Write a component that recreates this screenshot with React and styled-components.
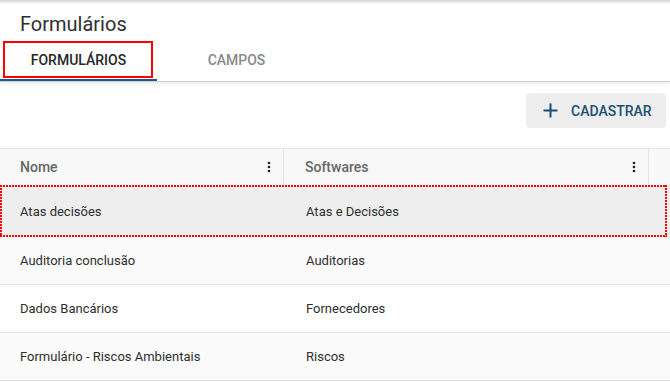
import React from "react";
import styled, { createGlobalStyle } from "styled-components";

const GlobalStyle = createGlobalStyle`
  html, body { margin: 0; padding: 0; background: #ffffff; }
  body { font-family: Roboto, "Noto Sans", Arial, sans-serif; -webkit-font-smoothing: antialiased; }
  * { box-sizing: border-box; }
`;

const Page = styled.div`
  width: 670px;
  height: 382px;
  overflow: hidden;
  background: #fff;
`;

const Header = styled.header`
  background: #fff;
  box-shadow: inset 0 4px 3px -2px rgba(0, 0, 0, 0.18), 0 2px 4px rgba(0, 0, 0, 0.08);
  border-bottom: 1px solid #cfcfcf;
  position: relative;
`;

const Title = styled.h1`
  margin: 0;
  padding: 12px 20px 0;
  font-size: 20px;
  line-height: 24px;
  font-weight: 400;
  color: #2f2f2f;
`;

const TabBar = styled.nav`
  display: flex;
  margin-top: 2px;
`;

const Tab = styled.div`
  position: relative;
  width: ${(p) => (p.$first ? "157px" : "159px")};
  height: 43px;
  display: flex;
  align-items: center;
  justify-content: center;
  font-size: 14px;
  font-weight: 500;
  color: ${(p) => (p.$active ? "#262626" : "#8a8a8a")};
  border-bottom: 2px solid ${(p) => (p.$active ? "#1f5a86" : "transparent")};
  padding-top: 2px;
`;

const Highlight = styled.span`
  position: absolute;
  top: 3px;
  left: 3px;
  right: 4px;
  bottom: 1px;
  border: 2px solid #ff0000;
  pointer-events: none;
`;

const Toolbar = styled.div`
  display: flex;
  justify-content: flex-end;
  padding: 11px 4px 0 0;
`;

const AddButton = styled.button`
  display: flex;
  align-items: center;
  gap: 13px;
  width: 140px;
  height: 35px;
  padding: 0 0 0 17px;
  border: none;
  border-radius: 4px;
  background: #eeeeee;
  color: #1d4f74;
  font-family: inherit;
  font-size: 14px;
  font-weight: 500;
  cursor: pointer;
`;

const Table = styled.div`
  margin-top: 20px;
  border-top: 1px solid #e4e4e4;
`;

const HeadRow = styled.div`
  display: grid;
  grid-template-columns: 284px 365px 1fr;
  height: 36px;
  background: #f8f8f8;
`;

const HeadCell = styled.div`
  display: flex;
  align-items: center;
  justify-content: space-between;
  padding: 0 12px 0 ${(p) => p.$pad || 20}px;
  border-right: ${(p) => (p.$last ? "none" : "1px solid #e2e2e2")};
  font-size: 14px;
  font-weight: 500;
  color: #666666;
`;

const Row = styled.div`
  position: relative;
  display: grid;
  grid-template-columns: 284px 1fr;
  height: ${(p) => p.$h || 48}px;
  background: ${(p) => p.$bg};
  border-bottom: ${(p) => (p.$selected ? "none" : "1px solid #e2e2e2")};
  font-size: 13px;
  color: #2e2e2e;
`;

const Cell = styled.div`
  display: flex;
  align-items: center;
  padding-left: ${(p) => p.$pad || 20}px;
`;

const Focus = styled.span`
  position: absolute;
  top: 0;
  left: 0;
  right: 3px;
  bottom: 0;
  pointer-events: none;
  background:
    linear-gradient(to right, #ff0000 2px, transparent 2px) top left / 3px 2px repeat-x,
    linear-gradient(to right, #ff0000 2px, transparent 2px) bottom left / 3px 2px repeat-x,
    linear-gradient(to bottom, #ff0000 2px, transparent 2px) top left / 2px 3px repeat-y,
    linear-gradient(to bottom, #ff0000 2px, transparent 2px) top right / 2px 3px repeat-y;
`;

const Kebab = () => (
  <svg width="4" height="12" viewBox="0 0 4 12" aria-hidden="true">
    <circle cx="2" cy="2" r="1.35" fill="#222" />
    <circle cx="2" cy="6" r="1.35" fill="#222" />
    <circle cx="2" cy="10" r="1.35" fill="#222" />
  </svg>
);

const Plus = () => (
  <svg width="15" height="15" viewBox="0 0 15 15" aria-hidden="true">
    <path d="M7.5 0.5v14M0.5 7.5h14" stroke="#1d4f74" strokeWidth="2" fill="none" />
  </svg>
);

const rows = [
  { nome: "Atas decisões", soft: "Atas e Decisões", bg: "#eeeeee", selected: true, h: 52 },
  { nome: "Auditoria conclusão", soft: "Auditorias", bg: "#fafafa" },
  { nome: "Dados Bancários", soft: "Fornecedores", bg: "#ffffff" },
  { nome: "Formulário - Riscos Ambientais", soft: "Riscos", bg: "#fafafa" },
];

export default function App() {
  return (
    <Page>
      <GlobalStyle />
      <Header>
        <Title>Formulários</Title>
        <TabBar>
          <Tab $active $first>
            FORMULÁRIOS
            <Highlight />
          </Tab>
          <Tab>CAMPOS</Tab>
        </TabBar>
      </Header>
      <Toolbar>
        <AddButton>
          <Plus />
          CADASTRAR
        </AddButton>
      </Toolbar>
      <Table>
        <HeadRow>
          <HeadCell>
            Nome
            <Kebab />
          </HeadCell>
          <HeadCell $pad={21}>
            Softwares
            <Kebab />
          </HeadCell>
          <HeadCell $last />
        </HeadRow>
        {rows.map((r) => (
          <Row key={r.nome} $bg={r.bg} $selected={r.selected} $h={r.h}>
            <Cell>{r.nome}</Cell>
            <Cell $pad={22}>{r.soft}</Cell>
            {r.selected && <Focus />}
          </Row>
        ))}
      </Table>
    </Page>
  );
}
